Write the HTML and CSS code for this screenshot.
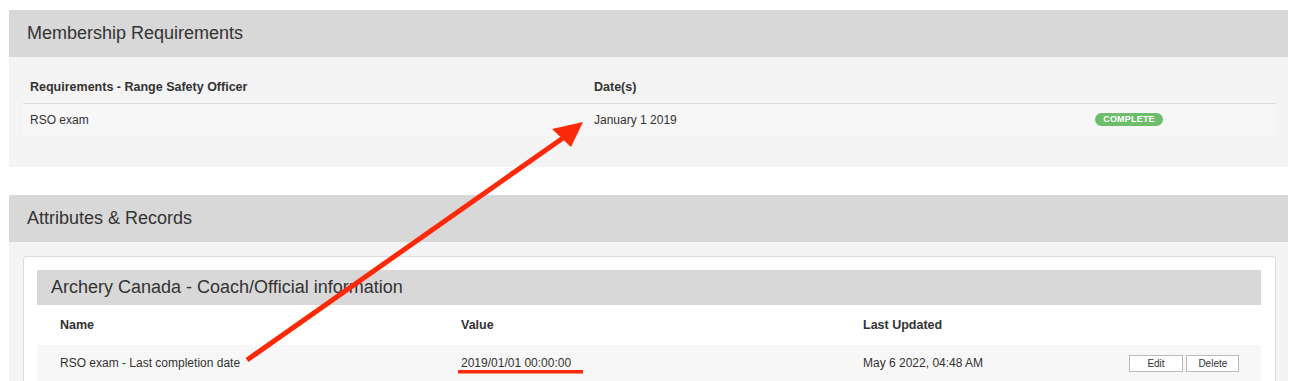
FILE: index.html
```html
<!DOCTYPE html>
<html lang="en">
<head>
    <meta charset="UTF-8">
    <title>Membership</title>
    <link rel="stylesheet" href="styles.css">
</head>
<body>
    <div class="page">
        <div class="panel">
            <div class="panel-head">Membership Requirements</div>
            <div class="panel-body req-body">
                <table class="req-table">
                    <thead>
                        <tr>
                            <th class="c1">Requirements - Range Safety Officer</th>
                            <th class="c2">Date(s)</th>
                            <th></th>
                        </tr>
                    </thead>
                    <tbody>
                        <tr>
                            <td>RSO exam</td>
                            <td>January 1 2019</td>
                            <td><span class="badge">COMPLETE</span></td>
                        </tr>
                    </tbody>
                </table>
            </div>
        </div>

        <div class="panel">
            <div class="panel-head">Attributes &amp; Records</div>
            <div class="panel-body attr-body">
                <div class="card">
                    <div class="card-head">Archery Canada - Coach/Official information</div>
                    <table class="attr-table">
                        <thead>
                            <tr>
                                <th class="a1">Name</th>
                                <th class="a2">Value</th>
                                <th class="a3">Last Updated</th>
                                <th></th>
                            </tr>
                        </thead>
                        <tbody>
                            <tr>
                                <td>RSO exam - Last completion date</td>
                                <td>2019/01/01 00:00:00</td>
                                <td>May 6 2022, 04:48 AM</td>
                                <td class="actions">
                                    <button class="btn">Edit</button>
                                    <button class="btn">Delete</button>
                                </td>
                            </tr>
                        </tbody>
                    </table>
                </div>
            </div>
        </div>

        <!-- annotation drawn over the screenshot -->
        <svg class="markup" width="1298" height="381" viewBox="0 0 1298 381">
            <line x1="247" y1="360" x2="563" y2="138" stroke="#fc2a0a" stroke-width="5"/>
            <polygon points="583,122 552,129 571,147" fill="#fc2a0a"/>
            <rect x="458" y="370" width="125" height="3.5" fill="#fc2a0a"/>
        </svg>
    </div>
</body>
</html>
```

FILE: styles.css
```css
body {
    margin: 0;
    background: #fff;
    font-family: "Liberation Sans", Arial, sans-serif;
    color: #333;
}

.page {
    position: relative;
    padding: 10px 10px 0 9px;
}

.panel {
    margin-bottom: 28px;
}

.panel-head {
    background: #d8d8d8;
    height: 47px;
    line-height: 47px;
    padding-left: 18px;
    font-size: 18px;
    color: #333;
}

.panel-body {
    background: #f4f4f4;
}

.req-body {
    padding: 13px 12px 31px 14px;
}

table {
    border-collapse: collapse;
    table-layout: fixed;
    width: 100%;
    font-size: 12px;
}

th {
    text-align: left;
    font-weight: bold;
    font-size: 12.5px;
    color: #333;
}

.req-table th {
    height: 33px;
    padding: 0 0 0 7px;
    border-bottom: 1px solid #dcdcdc;
}

.req-table td {
    height: 32px;
    padding: 0 0 0 7px;
    background: #f7f7f7;
}

.req-table .c1 {
    width: 557px;
}

.req-table .c2 {
    width: 494px;
}

.badge {
    display: inline-block;
    width: 68px;
    height: 13px;
    line-height: 13px;
    border-radius: 7px;
    background: #6dbd6a;
    color: #fff;
    font-size: 9px;
    font-weight: bold;
    letter-spacing: 0.2px;
    text-align: center;
    vertical-align: middle;
    position: relative;
    top: -1px;
}

.attr-body {
    padding: 14px 12px 0 14px;
}

.card {
    background: #fff;
    border: 1px solid #dcdcdc;
    border-bottom: none;
    border-radius: 4px 4px 0 0;
    padding: 13px 14px 0 13px;
}

.card-head {
    background: #d8d8d8;
    height: 35px;
    line-height: 35px;
    padding-left: 14px;
    font-size: 18px;
    color: #333;
}

.attr-table th {
    height: 40px;
    padding: 0;
}

.attr-table td {
    height: 36px;
    padding: 0;
    background: #f7f7f7;
    font-size: 12px;
}

.attr-table th:first-child,
.attr-table td:first-child {
    padding-left: 23px;
}

.attr-table .a1 {
    width: 401px;
}

.attr-table .a2 {
    width: 402px;
}

.attr-table .a3 {
    width: 266px;
}

.actions {
    white-space: nowrap;
}

.btn {
    font-family: "Liberation Sans", Arial, sans-serif;
    font-size: 10px;
    color: #333;
    background: #fff;
    border: 1px solid #bbb;
    height: 17px;
    padding: 0;
    margin: 0;
    vertical-align: middle;
}

.btn:first-child {
    width: 54px;
}

.btn + .btn {
    width: 53px;
}

.markup {
    position: absolute;
    left: 0;
    top: 0;
    pointer-events: none;
}
```
